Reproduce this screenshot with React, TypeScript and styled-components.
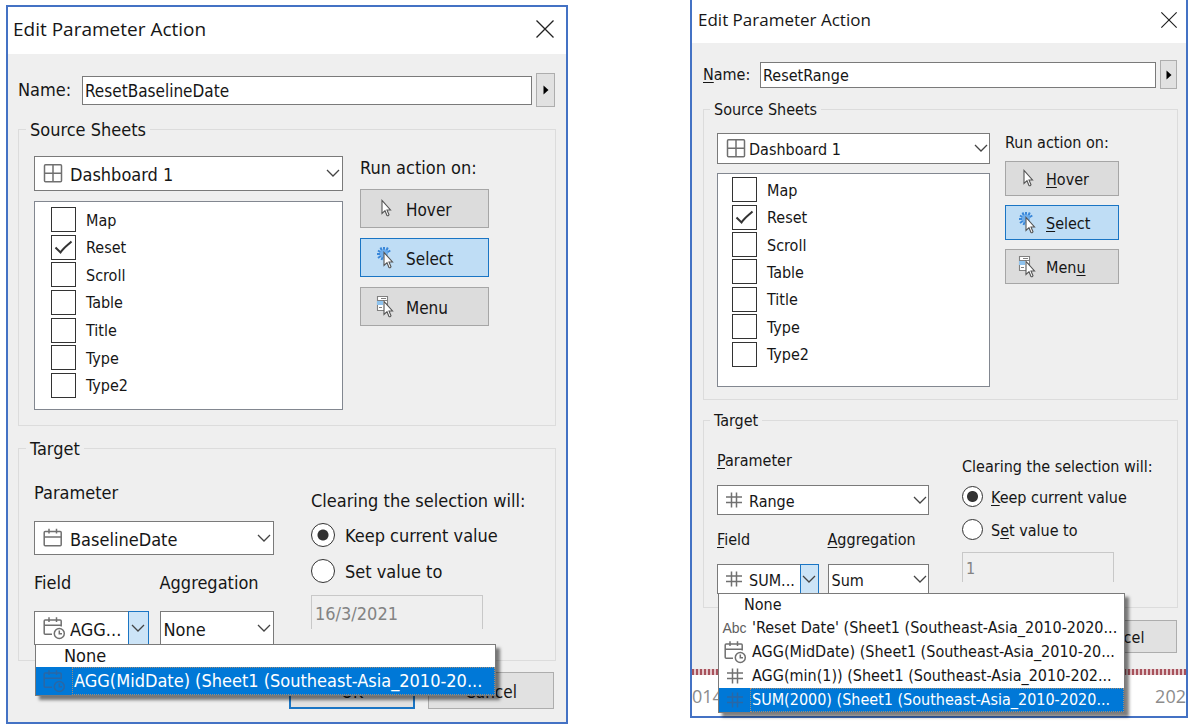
import React, { ReactNode, useId } from 'react';
import styled, { createGlobalStyle, css, ThemeProvider } from 'styled-components';

/* ---------- themes: the two dialog densities ---------- */

const large = {
  top: 5,
  topBorder: 2,
  title: { height: 47, pad: 5, font: 19, close: 20, closePad: 11 },
  font: 18,
  smallFont: 17,
  legend: 22,
  legendPad: 11,
  line: 24,
  name: { padTop: 19, label: 64, height: 29, button: 34, buttonWidth: 19, gap: 4 },
  side: { left: 10, right: 10 },
  groupGap: 11,
  source: { cols: '309fr 195fr', pad: '16px 0 15px 15px', gap: 17, rowGap: 10, combo: 35 },
  list: { pad: '4px 0 10px 16px', height: 209 },
  action: { width: 129, height: 39, gap: 10, top: 9, iconPad: 15, iconGap: 6 },
  target: { cols: '240fr 244fr', pad: '22px 0 15px 15px', gap: 37, combo: 34, labelTop: 16, labelGap: 16, fieldGap: 11 },
  radio: { size: 24, top: 8, first: 10, gap: 12, text: 10, input: 34, inputWidth: 172 },
  comboPad: 35,
  arrow: 19,
  menu: { width: 461, first: 22, row: 28, icon: 36, firstPad: 26 },
  footer: { pad: '11px 2px 13px', width: 126, height: 37, gap: 13 },
};

const compact: typeof large = {
  top: 0,
  topBorder: 0,
  title: { height: 43, pad: 6, font: 17, close: 18, closePad: 8 },
  font: 16,
  smallFont: 16,
  legend: 20,
  legendPad: 10,
  line: 20,
  name: { padTop: 17, label: 57, height: 26, button: 29, buttonWidth: 17, gap: 4 },
  side: { left: 11, right: 8 },
  groupGap: 10,
  source: { cols: '273fr 172fr', pad: '14px 0 12px 13px', gap: 15, rowGap: 9, combo: 31 },
  list: { pad: '2px 0 18px 14px', height: 214 },
  action: { width: 114, height: 35, gap: 9, top: 8, iconPad: 12, iconGap: 4 },
  target: { cols: '212fr 215fr', pad: '21px 0 13px 13px', gap: 33, combo: 30, labelTop: 15, labelGap: 14, fieldGap: 9 },
  radio: { size: 21, top: 6, first: 9, gap: 12, text: 8, input: 30, inputWidth: 152 },
  comboPad: 31,
  arrow: 17,
  menu: { width: 407, first: 22, row: 24, icon: 31, firstPad: 23 },
  footer: { pad: '12px 1px 16px', width: 114, height: 33, gap: 11 },
};

type Density = typeof large;

declare module 'styled-components' {
  export interface DefaultTheme extends Density {}
}

/* ---------- page ---------- */

const GlobalStyle = createGlobalStyle`
  *, *::before, *::after { box-sizing: border-box; }
  body { margin: 0; background: #fff; color: #161616; }
  body, button, input, select { font-family: 'DejaVu Sans Condensed', 'Noto Sans', sans-serif; }
`;

const Page = styled.main`
  display: grid;
  grid-template-columns: 562fr 498fr;
  gap: 122px;
  align-items: start;
  padding: 0 4px 0 6px;
`;

const Dialog = styled.section`
  min-width: 0;
  margin-top: ${p => p.theme.top}px;
  border: 2px solid #4472c4;
  border-top-width: ${p => p.theme.topBorder}px;
  background: #fff;
  font-size: ${p => p.theme.font}px;
  line-height: ${p => p.theme.line}px;
`;

const TitleBar = styled.header`
  display: flex;
  align-items: center;
  justify-content: space-between;
  height: ${p => p.theme.title.height}px;
  padding: 0 ${p => p.theme.title.closePad}px 3px ${p => p.theme.title.pad}px;
`;

const Title = styled.h1`
  margin: 0;
  font: 400 ${p => p.theme.title.font}px/28px 'Open Sans', 'Noto Sans', sans-serif;
`;

const CloseButton = styled.button`
  display: flex;
  padding: 0;
  border: 0;
  background: none;
  svg { width: ${p => p.theme.title.close}px; height: ${p => p.theme.title.close}px; }
`;

const Body = styled.form`
  padding: ${p => p.theme.name.padTop}px ${p => p.theme.side.right}px 0 ${p => p.theme.side.left}px;
  background: #efefef;
`;

/* ---------- form parts ---------- */

const NameRow = styled.div`
  display: flex;
  align-items: center;
  padding-right: 1px;
`;

const NameLabel = styled.label`
  flex: 0 0 ${p => p.theme.name.label}px;
`;

const NameInput = styled.input`
  flex: 1;
  min-width: 0;
  height: ${p => p.theme.name.height}px;
  margin-right: ${p => p.theme.name.gap}px;
  padding: 2px 2px 0;
  border: 1px solid #7a7a7a;
  background: #fff;
  color: inherit;
  font-size: ${p => p.theme.smallFont}px;
`;

const MoreButton = styled.button`
  display: flex;
  align-items: center;
  justify-content: center;
  width: ${p => p.theme.name.buttonWidth}px;
  height: ${p => p.theme.name.button}px;
  padding: 0;
  border: 1px solid #adadad;
  background: #e1e1e1;
`;

const Group = styled.fieldset`
  min-width: 0;
  margin: ${p => p.theme.groupGap}px 0 0;
  padding: 0;
  border: 1px solid #dcdcdc;
`;

const Legend = styled.legend`
  margin-left: ${p => p.theme.legendPad - 4}px;
  padding: 1px 4px 0;
  line-height: ${p => p.theme.legend - 1}px;
`;

const SourceLayout = styled.div`
  display: grid;
  grid-template-columns: ${p => p.theme.source.cols};
  column-gap: ${p => p.theme.source.gap}px;
  padding: ${p => p.theme.source.pad};
`;

const SourceColumn = styled.div`
  display: flex;
  flex-direction: column;
  gap: ${p => p.theme.source.rowGap}px;
`;

const SheetList = styled.div`
  display: grid;
  grid-auto-rows: 1fr;
  align-items: center;
  height: ${p => p.theme.list.height}px;
  padding: ${p => p.theme.list.pad};
  border: 1px solid #828790;
  background: #fff;
  font-size: 16px;
`;

const CheckLabel = styled.label`
  display: flex;
  align-items: center;
  gap: 10px;
`;

const CheckText = styled.span`
  padding-top: 2px;
`;

const CheckBox = styled.span`
  display: grid;
  width: 25px;
  height: 25px;
  > * { grid-area: 1 / 1; }
  svg { width: 25px; height: 25px; pointer-events: none; }
`;

const CheckInput = styled.input`
  width: 25px;
  height: 25px;
  margin: 0;
  appearance: none;
  border: 1px solid #333;
  background: #fff;
  & + svg { visibility: hidden; }
  &:checked + svg { visibility: visible; }
`;

const Actions = styled.div`
  display: flex;
  flex-direction: column;
  align-items: flex-start;
  gap: ${p => p.theme.action.gap}px;
  margin-top: ${p => p.theme.action.top}px;
`;

const ActionButton = styled.button<{ $on?: boolean }>`
  display: flex;
  align-items: center;
  gap: ${p => p.theme.action.iconGap}px;
  width: ${p => p.theme.action.width}px;
  height: ${p => p.theme.action.height}px;
  padding: 2px 0 0 ${p => p.theme.action.iconPad}px;
  border: 1px solid ${p => (p.$on ? '#1a75c4' : '#a6a6a6')};
  background: ${p => (p.$on ? '#bfddf5' : '#dcdcdc')};
  color: inherit;
  font-size: ${p => p.theme.smallFont}px;
  svg { margin-bottom: 2px; }
`;

const TargetLayout = styled.div`
  display: grid;
  grid-template-columns: ${p => p.theme.target.cols};
  column-gap: ${p => p.theme.target.gap}px;
  padding: ${p => p.theme.target.pad};
`;

const FieldLabel = styled.label`
  display: block;
  margin-bottom: ${p => p.theme.target.labelGap}px;
`;

const FieldPair = styled.div`
  display: grid;
  grid-template-columns: 1fr 1fr;
  column-gap: ${p => p.theme.target.fieldGap}px;
  margin-top: ${p => p.theme.target.labelTop}px;
`;

const ComboBox = styled.div<{ $tall?: boolean }>`
  position: relative;
  height: ${p => (p.$tall ? p.theme.source.combo : p.theme.target.combo)}px;
`;

const ComboSelect = styled.select<{ $icon?: boolean }>`
  width: 100%;
  height: 100%;
  padding: 2px ${p => p.theme.arrow}px 0 ${p => (p.$icon ? p.theme.comboPad : 3)}px;
  appearance: none;
  border: 1px solid #7a7a7a;
  border-radius: 0;
  background: #fff;
  color: inherit;
  font-size: inherit;
`;

const ComboIcon = styled.span`
  position: absolute;
  top: 0;
  bottom: 0;
  left: 8px;
  display: flex;
  align-items: center;
  pointer-events: none;
`;

const ComboArrow = styled.span<{ $open?: boolean }>`
  position: absolute;
  top: 0;
  right: 0;
  bottom: 0;
  display: flex;
  align-items: center;
  justify-content: center;
  width: ${p => p.theme.arrow + 2}px;
  padding-bottom: 1px;
  pointer-events: none;
  ${p => p.$open && css`
    border: 1px solid #1a75c4;
    background: #cce4f7;
  `}
`;

const Menu = styled.ul`
  position: absolute;
  z-index: 2;
  top: calc(100% - 1px);
  left: 1px;
  width: ${p => p.theme.menu.width}px;
  margin: 0;
  padding: 0;
  border: 1px solid #7a7a7a;
  background: #fff;
  box-shadow: 4px 4px 3px rgba(0, 0, 0, 0.5);
  line-height: 18px;
  list-style: none;
`;

const MenuItem = styled.li<{ $plain?: boolean; $active?: boolean }>`
  display: grid;
  grid-template-columns: ${p => (p.$plain ? p.theme.menu.firstPad : p.theme.menu.icon)}px 1fr;
  height: ${p => (p.$plain ? p.theme.menu.first : p.theme.menu.row)}px;
  background: ${p => (p.$active ? '#0078d7' : '#fff')};
  color: ${p => (p.$active ? '#fff' : 'inherit')};
`;

const MenuIcon = styled.span`
  display: flex;
  align-items: center;
  justify-content: center;
`;

const MenuText = styled.span<{ $active?: boolean }>`
  display: flex;
  align-items: center;
  padding-left: 1px;
  border: 1px ${p => (p.$active ? 'dotted #a08c78' : 'solid transparent')};
  white-space: nowrap;
`;

const TypeTag = styled.span`
  color: #606060;
  font: 400 14px/16px 'Liberation Sans', sans-serif;
`;

const Clearing = styled.div`
  display: flex;
  flex-direction: column;
  align-items: flex-start;
  padding-top: ${p => p.theme.radio.top}px;
  white-space: nowrap;
`;

const RadioLabel = styled.label<{ $first?: boolean }>`
  display: flex;
  align-items: center;
  gap: ${p => p.theme.radio.text}px;
  height: ${p => p.theme.radio.size}px;
  margin-top: ${p => (p.$first ? p.theme.radio.first : p.theme.radio.gap)}px;
`;

const RadioText = styled.span`
  padding-top: 2px;
`;

const RadioInput = styled.input`
  width: ${p => p.theme.radio.size}px;
  height: ${p => p.theme.radio.size}px;
  margin: 0;
  appearance: none;
  border: 1px solid #333;
  border-radius: 50%;
  background: #fff;
  &:checked { background: radial-gradient(circle, #333 5px, #fff 6px); }
`;

const ValueInput = styled.input`
  width: ${p => p.theme.radio.inputWidth}px;
  height: ${p => p.theme.radio.input}px;
  margin-top: ${p => p.theme.radio.gap}px;
  padding: 2px 3px 0;
  border: 1px solid #c8c8c8;
  border-bottom: 0;
  background: transparent;
  color: #838383;
  font-size: inherit;
`;

const Footer = styled.div`
  display: flex;
  justify-content: flex-end;
  gap: ${p => p.theme.footer.gap}px;
  padding: ${p => p.theme.footer.pad};
`;

const FooterButton = styled.button<{ $default?: boolean }>`
  width: ${p => p.theme.footer.width}px;
  height: ${p => p.theme.footer.height}px;
  padding: 2px 0 0;
  border: ${p => (p.$default ? '2px solid #1a75c4' : '1px solid #adadad')};
  background: #e1e1e1;
  color: inherit;
  font-size: ${p => p.theme.smallFont}px;
`;

/* ---------- chart strip under the compact dialog ---------- */

const AxisTicks = styled.div`
  height: 6px;
  background: repeating-linear-gradient(90deg, #a8525c 0 2px, #e3c9cc 2px 4px);
`;

const AxisLabels = styled.div`
  display: flex;
  justify-content: space-between;
  height: 41px;
  color: #8c8c8c;
  font: 18px/42px 'Open Sans', 'Noto Sans', sans-serif;
`;

const Key = styled.span`
  text-decoration: underline;
  text-decoration-thickness: 1px;
  text-underline-offset: 2px;
`;

/* ---------- icons ---------- */

const CloseIcon = () => (
  <svg viewBox="0 0 20 20" fill="none" stroke="#222" strokeWidth="1.3">
    <path d="M1.5 1.5 18.5 18.5M18.5 1.5 1.5 18.5" />
  </svg>
);

const ChevronIcon = () => (
  <svg width="14" height="8" viewBox="0 0 14 8" fill="none" stroke="#444" strokeWidth="1.3">
    <path d="M1 1 7 7 13 1" />
  </svg>
);

const TickIcon = () => (
  <svg viewBox="0 0 25 25" fill="none" stroke="#333" strokeWidth="2">
    <path d="M4.5 12.5 9.5 17.5 C12 13.5 15 11.5 20.5 6.5" />
  </svg>
);

const DashboardIcon = () => (
  <svg width="21" height="20" viewBox="0 0 21 20" fill="none" stroke="#707070" strokeWidth="1.5">
    <rect x="2.5" y="0.8" width="17" height="17" rx="1" />
    <path d="M11 1V18M2.5 9.3H19.5" />
  </svg>
);

const CalendarIcon = () => (
  <svg width="21" height="20" viewBox="0 0 21 20" fill="none" stroke="#707070" strokeWidth="1.5">
    <rect x="2.2" y="3.5" width="17" height="14.3" rx="1" />
    <path d="M2.2 9H19.2M7 0.8V5.5M14.5 0.8V5.5" />
  </svg>
);

const CalendarClockIcon = ({ color = '#707070' }: { color?: string }) => (
  <svg width="24" height="24" viewBox="0 0 24 24" fill="none" stroke={color} strokeWidth="1.5">
    <path d="M10 18.3H3.2Q2.2 18.3 2.2 17.3V5Q2.2 4 3.2 4H18.2Q19.2 4 19.2 5V10.5M2.2 9.2H19.2M7 1.3V6M14.5 1.3V6" />
    <circle cx="17.3" cy="17.5" r="5" />
    <path d="M17.3 14.5V17.7H20" />
  </svg>
);

const HashIcon = ({ color = '#707070' }: { color?: string }) => (
  <svg width="18" height="18" viewBox="0 0 18 18" fill="none" stroke={color} strokeWidth="1.5">
    <path d="M1 6H17M1 11.5H17M6.5 1.5V16.5M11.5 1.5V16.5" />
  </svg>
);

const arrowShape = 'M10 4.5V17.5L13 14.7L15 19.5Q16.2 20.2 17 18.7L15 14H18.5Z';

const HoverIcon = () => (
  <svg width="24" height="24" viewBox="0 0 24 24" fill="#fff" stroke="#555" strokeWidth="1.1">
    <path transform="translate(-4 -1)" d={arrowShape} />
  </svg>
);

const SelectIcon = () => (
  <svg width="24" height="24" viewBox="0 0 24 24" fill="#fff" stroke="#555" strokeWidth="1.1">
    <path
      stroke="#3a87d9"
      strokeWidth="2"
      d="M8 1V4.5M4.5 1.5 6 5M11.8 1.5 10.2 5M2 4.5 5 6.5M14.3 4.5 11 6.5M1 8H4.5M2 12 5 9.7M5.5 14 6.8 10.5"
    />
    <circle cx="8" cy="7.5" r="4" fill="#6fadea" stroke="none" />
    <path transform="translate(-2 2)" d={arrowShape} />
  </svg>
);

const MenuPointerIcon = () => (
  <svg width="24" height="24" viewBox="0 0 24 24" fill="#fff" stroke="#555" strokeWidth="1.1">
    <path stroke="#808080" d="M1.5 1.5H11.5V5.5H1.5ZM1.5 5.5H11.5V15.5H1.5Z" />
    <path fill="#8fc3ee" stroke="none" d="M1 6H7V10H1Z" />
    <path stroke="#808080" d="M5 3.5H10M8 8.5H10.5M3 12.5H6" />
    <path transform="translate(-2 2)" d={arrowShape} />
  </svg>
);

/* ---------- components ---------- */

/* Underlines the letter that follows an ampersand, as in "&Name:". */
const Mnemonic = ({ text }: { text: string }) => {
  const at = text.indexOf('&');
  if (at < 0) return <span>{text}</span>;
  return (
    <span>
      {text.slice(0, at)}
      <Key>{text[at + 1]}</Key>
      {text.slice(at + 2)}
    </span>
  );
};

interface ComboProps {
  id?: string;
  label?: string;
  value: string;
  icon?: ReactNode;
  tall?: boolean;
  open?: boolean;
  children?: ReactNode;
}

const Combo = ({ id, label, value, icon, tall, open, children }: ComboProps) => (
  <ComboBox $tall={tall}>
    <ComboSelect id={id} aria-label={label} $icon={!!icon}>
      <option>{value}</option>
    </ComboSelect>
    {icon && <ComboIcon>{icon}</ComboIcon>}
    <ComboArrow $open={open}><ChevronIcon /></ComboArrow>
    {children}
  </ComboBox>
);

interface MenuEntry {
  text: string;
  icon?: ReactNode;
  active?: boolean;
}

interface DialogProps {
  density: Density;
  name: string;
  labels: Record<'name' | 'hover' | 'select' | 'menu' | 'parameter' | 'field' | 'aggregation' | 'keep' | 'set', string>;
  parameter: { text: string; icon: ReactNode };
  field: { text: string; icon: ReactNode };
  aggregation: string;
  value: string;
  entries: MenuEntry[];
  children?: ReactNode;
}

const sheets = ['Map', 'Reset', 'Scroll', 'Table', 'Title', 'Type', 'Type2'];

const ParameterDialog = (p: DialogProps) => {
  const id = useId();
  return (
    <ThemeProvider theme={p.density}>
      <Dialog>
        <TitleBar>
          <Title>Edit Parameter Action</Title>
          <CloseButton type="button" aria-label="Close"><CloseIcon /></CloseButton>
        </TitleBar>
        <Body>
          <NameRow>
            <NameLabel htmlFor={id + 'name'}><Mnemonic text={p.labels.name} /></NameLabel>
            <NameInput id={id + 'name'} defaultValue={p.name} />
            <MoreButton type="button" aria-label="Insert">
              <svg width="6" height="10" viewBox="0 0 6 10"><path d="M0.5 0.5 5.5 5 0.5 9.5Z" /></svg>
            </MoreButton>
          </NameRow>

          <Group>
            <Legend>Source Sheets</Legend>
            <SourceLayout>
              <SourceColumn>
                <Combo label="Source" value="Dashboard 1" icon={<DashboardIcon />} tall />
                <SheetList>
                  {sheets.map(sheet => (
                    <CheckLabel key={sheet}>
                      <CheckBox>
                        <CheckInput type="checkbox" defaultChecked={sheet === 'Reset'} />
                        <TickIcon />
                      </CheckBox>
                      <CheckText>{sheet}</CheckText>
                    </CheckLabel>
                  ))}
                </SheetList>
              </SourceColumn>
              <div>
                <div>Run action on:</div>
                <Actions>
                  <ActionButton type="button"><HoverIcon /><Mnemonic text={p.labels.hover} /></ActionButton>
                  <ActionButton type="button" $on><SelectIcon /><Mnemonic text={p.labels.select} /></ActionButton>
                  <ActionButton type="button"><MenuPointerIcon /><Mnemonic text={p.labels.menu} /></ActionButton>
                </Actions>
              </div>
            </SourceLayout>
          </Group>

          <Group>
            <Legend>Target</Legend>
            <TargetLayout>
              <div>
                <FieldLabel htmlFor={id + 'param'}><Mnemonic text={p.labels.parameter} /></FieldLabel>
                <Combo id={id + 'param'} value={p.parameter.text} icon={p.parameter.icon} />
                <FieldPair>
                  <div>
                    <FieldLabel htmlFor={id + 'field'}><Mnemonic text={p.labels.field} /></FieldLabel>
                    <Combo id={id + 'field'} value={p.field.text} icon={p.field.icon} open>
                      <Menu role="listbox">
                        {p.entries.map(entry => (
                          <MenuItem
                            key={entry.text}
                            role="option"
                            aria-selected={!!entry.active}
                            $plain={!entry.icon}
                            $active={entry.active}
                          >
                            <MenuIcon>{entry.icon}</MenuIcon>
                            <MenuText $active={entry.active}>{entry.text}</MenuText>
                          </MenuItem>
                        ))}
                      </Menu>
                    </Combo>
                  </div>
                  <div>
                    <FieldLabel htmlFor={id + 'agg'}><Mnemonic text={p.labels.aggregation} /></FieldLabel>
                    <Combo id={id + 'agg'} value={p.aggregation} />
                  </div>
                </FieldPair>
              </div>
              <Clearing>
                <div>Clearing the selection will:</div>
                <RadioLabel $first>
                  <RadioInput type="radio" name={id + 'clear'} defaultChecked />
                  <RadioText><Mnemonic text={p.labels.keep} /></RadioText>
                </RadioLabel>
                <RadioLabel>
                  <RadioInput type="radio" name={id + 'clear'} />
                  <RadioText><Mnemonic text={p.labels.set} /></RadioText>
                </RadioLabel>
                <ValueInput aria-label="Value" defaultValue={p.value} disabled />
              </Clearing>
            </TargetLayout>
          </Group>

          <Footer>
            <FooterButton type="button" $default>OK</FooterButton>
            <FooterButton type="button">Cancel</FooterButton>
          </Footer>
        </Body>
        {p.children}
      </Dialog>
    </ThemeProvider>
  );
};

export default function App() {
  return (
    <Page>
      <GlobalStyle />
      <ParameterDialog
        density={large}
        name="ResetBaselineDate"
        labels={{
          name: 'Name:', hover: 'Hover', select: 'Select', menu: 'Menu', parameter: 'Parameter',
          field: 'Field', aggregation: 'Aggregation', keep: 'Keep current value', set: 'Set value to',
        }}
        parameter={{ text: 'BaselineDate', icon: <CalendarIcon /> }}
        field={{ text: 'AGG...', icon: <CalendarClockIcon /> }}
        aggregation="None"
        value="16/3/2021"
        entries={[
          { text: 'None' },
          { text: 'AGG(MidDate) (Sheet1 (Southeast-Asia_2010-20...', icon: <CalendarClockIcon color="#2a67a5" />, active: true },
        ]}
      />
      <ParameterDialog
        density={compact}
        name="ResetRange"
        labels={{
          name: '&Name:', hover: '&Hover', select: '&Select', menu: 'Men&u', parameter: '&Parameter',
          field: '&Field', aggregation: '&Aggregation', keep: '&Keep current value', set: 'S&et value to',
        }}
        parameter={{ text: 'Range', icon: <HashIcon /> }}
        field={{ text: 'SUM...', icon: <HashIcon /> }}
        aggregation="Sum"
        value="1"
        entries={[
          { text: 'None' },
          { text: "'Reset Date' (Sheet1 (Southeast-Asia_2010-2020...", icon: <TypeTag>Abc</TypeTag> },
          { text: 'AGG(MidDate) (Sheet1 (Southeast-Asia_2010-20...', icon: <CalendarClockIcon /> },
          { text: 'AGG(min(1)) (Sheet1 (Southeast-Asia_2010-202...', icon: <HashIcon /> },
          { text: 'SUM(2000) (Sheet1 (Southeast-Asia_2010-2020...', icon: <HashIcon color="#2a67a5" />, active: true },
        ]}
      >
        <AxisTicks />
        <AxisLabels>
          <span>014</span>
          <span>202</span>
        </AxisLabels>
      </ParameterDialog>
    </Page>
  );
}
